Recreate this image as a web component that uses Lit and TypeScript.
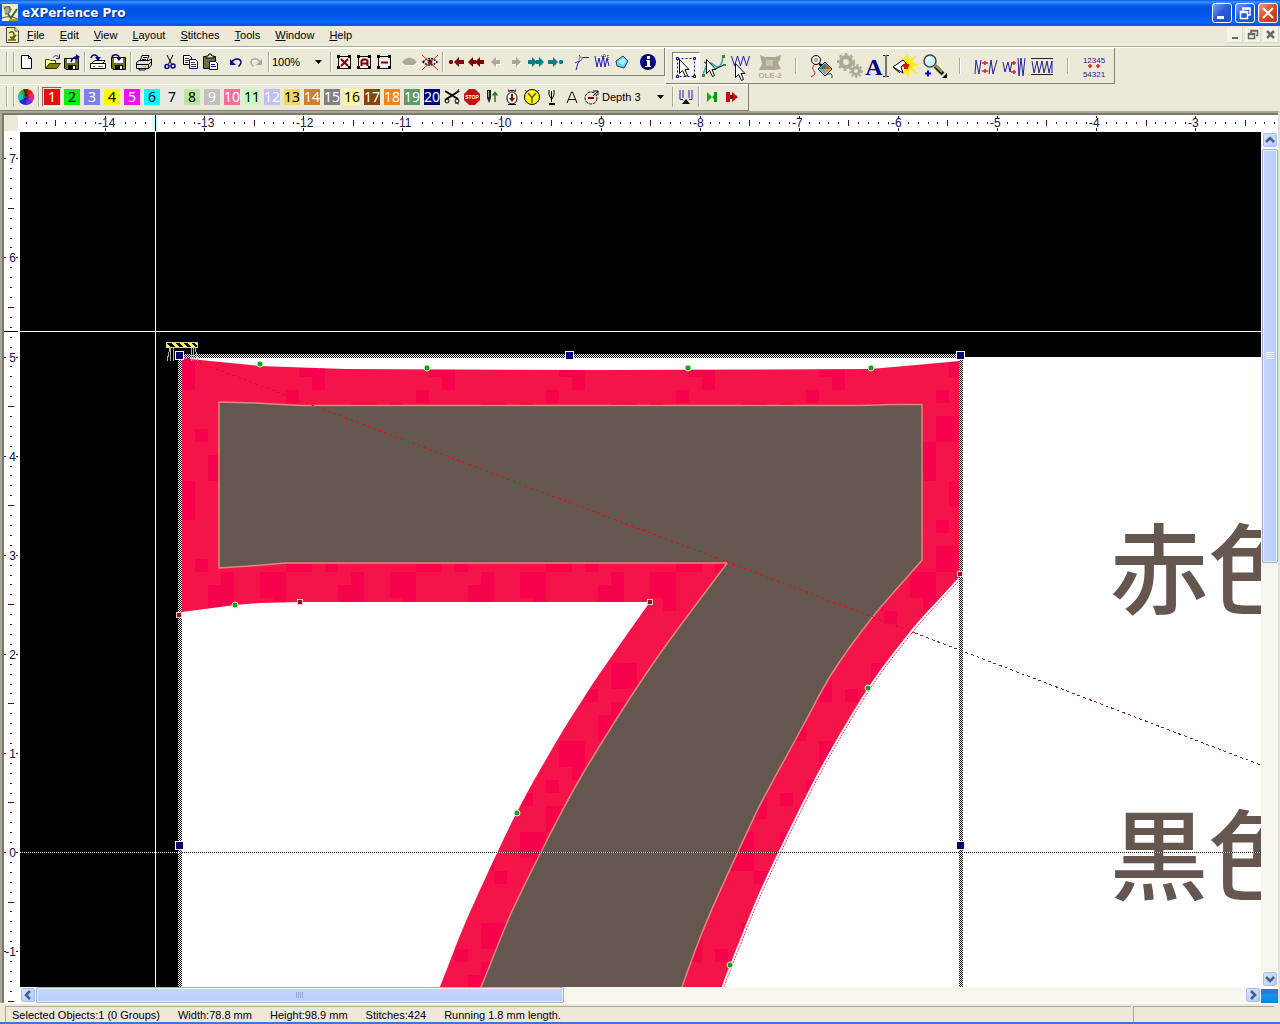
import { LitElement, html, svg, css } from "lit";
import { customElement, state } from "lit/decorators.js";

const cursor = (x: number, y: number) => svg`
  <path transform="translate(${x} ${y})" d="M.5 .5V14.5L3.5 11.5L6.5 17.5L8.5 16.5L6 10.5H10Z" fill="#fff" stroke="#000"/>`;

const node4 = (mark: unknown) => svg`
  <path d="M4.500 4.500H16.500V16.500H4.500Z" fill="#fbeeee" stroke="#000"/>
  <path d="M3 3h3v3H3zM14 3h3v3h-3zM3 14h3v3H3zM14 14h3v3h-3z" fill="#000"/>${mark}`;

const arrow = (d: string, fill: string) => svg`<path d=${d} fill=${fill}/>`;

const icons: Record<string, unknown> = {
  page: svg`<path d="M5.500 3.500H12.500L15.500 6.500V16.500H5.500Z" fill="#fff" stroke="#000"/><path d="M12.500 3.500V6.500H15.500" fill="none" stroke="#000"/>`,
  open: svg`<path d="M3.500 16V7.500H7.500L8.500 8.500H13.500V11" fill="#ffffa0" stroke="#404000"/><path d="M3.500 16.500L7.500 11.500H18.500L14.500 16.500Z" fill="#808000" stroke="#303000"/><path d="M11 5.500C13 3 15 3 17 5.500M17.500 2.500V6.500H14" fill="none" stroke="#102080"/>`,
  save: svg`<path d="M2.500 6.500H16.500V17.500H4L2.500 16Z" fill="#707010" stroke="#000"/><path d="M5 7H13V11H5Z" fill="#eee"/><path d="M6 13H14V17H6Z" fill="#000"/><path d="M11 14h2v3h-2z" fill="#fff"/><path d="M9 10C10 6 12 5 15 5" fill="none" stroke="#000080" stroke-width="1.500"/><path d="M14 2L18 5L14 8Z" fill="#000080"/>`,
  drive: svg`<path d="M4 11L7 8.500H17L15 11" fill="#fff" stroke="#000"/><path d="M2.500 11.500H17.500V16.500H2.500Z" fill="#fff" stroke="#000"/><path d="M5 14h2v1H5z" fill="#0a0"/><path d="M10 14h5v1h-5z" fill="#777"/><path d="M3 6C4 2 9 2 10 6" fill="none" stroke="#000080" stroke-width="1.500"/><path d="M7 5H13L10 9Z" fill="#000080"/>`,
  disk: svg`<path d="M3.500 5.500H17.500V17.500H5L3.500 16Z" fill="#707010" stroke="#000"/><path d="M6 6H15V11H6Z" fill="#fff"/><path d="M7 13H15V17H7Z" fill="#000"/><path d="M12 14h2v3h-2z" fill="#fff"/><path d="M4 5C5 2 10 2 11 5" fill="none" stroke="#000080" stroke-width="1.500"/><path d="M8 5H14L11 9Z" fill="#000080"/>`,
  print: svg`<path d="M6 9L8 3.500H15L13 9Z" fill="#fff" stroke="#000"/><path d="M9 5.500H13M8 7.500H12" stroke="#000"/><path d="M2.500 10.500L5 8.500H15L17.500 7V13L14.500 16.500H2.500Z" fill="#ddd" stroke="#000"/><path d="M3 12.500H14.500L17 10M14.500 13V16" fill="none" stroke="#000"/><path d="M5 16.500H12L11 18H5Z" fill="#fff" stroke="#000"/><path d="M9 14h3v1H9z" fill="#aa0"/>`,
  cut: svg`<path d="M7 3L11.500 12M13 3L8.500 12" stroke="#000"/><circle cx="7" cy="14.500" r="2" fill="none" stroke="#000080" stroke-width="1.500"/><circle cx="13" cy="14" r="2" fill="none" stroke="#000080" stroke-width="1.500"/>`,
  copy: svg`<path d="M3.500 3.500H9.500L11.500 5.500V12.500H3.500Z" fill="#fff" stroke="#000"/><path d="M5 6.500H9M5 8.500H9M5 10.500H8" stroke="#333"/><path d="M9.500 7.500H15.500L17.500 9.500V16.500H9.500Z" fill="#fff" stroke="#000080"/><path d="M11 10.500H15M11 12.500H16M11 14.500H16" stroke="#333"/>`,
  paste: svg`<path d="M3.500 4.500H15.500V16.500H3.500Z" fill="#707040" stroke="#000"/><path d="M6 6V4H8L9 2H11L12 4H14V6Z" fill="#ddd" stroke="#000"/><path d="M9.500 9.500H15.500L17.500 11.500V17.500H9.500Z" fill="#fff" stroke="#000080"/><path d="M11 12.500H15M11 14.500H16" stroke="#000080"/>`,
  undo: svg`<path d="M6 10C8 6 14 6 15 9.500C15.500 12 14 13 12.500 14.500" fill="none" stroke="#000080" stroke-width="1.500"/><path d="M4 7V13H10Z" fill="#000080"/>`,
  redo: svg`<path d="M15 11C13 7 7 7 6 10.500C5.500 13 7 14 8.500 15.500" fill="none" stroke="#fff" stroke-width="1.500"/><path d="M14 10C12 6 6 6 5 9.500C4.500 12 6 13 7.500 14.500" fill="none" stroke="#aca899" stroke-width="1.500"/><path d="M16 7V13H10Z" fill="#aca899"/>`,
  nodeX: node4(svg`<path d="M7 7L14 14M14 7L7 14" stroke="#800000" stroke-width="2"/>`),
  nodeA: node4(svg`<path d="M7.500 14V9L9 7.500H12L13.500 9V14M7.500 11.500H13.500" fill="none" stroke="#800000" stroke-width="2"/>`),
  nodeM: node4(svg`<path d="M7 10.500H14" stroke="#800000" stroke-width="2"/>`),
  eye: svg`<path d="M3 11L6 8L10 6.500L15 8L18 11L15 14H6Z" fill="#fff"/><path d="M2 10L5 7L9 5.500L14 7L17 10L14 13H5Z" fill="#aca899"/>`,
  eyeOff: svg`<path d="M3 10Q10 3 17 10Q10 16 3 10Z" fill="#fff" stroke="#000" stroke-width="1.500" stroke-dasharray="2 1"/><circle cx="10" cy="10" r="2.500" fill="#602020"/><path d="M9 8h2v3H9z" fill="#000"/><path d="M2 3L18 18M18 3L2 18" stroke="#d02020"/>`,
  first: arrow("M3 9L4 8H6L7 9V11L6 12H4L3 11ZM8 10L13 5V8H18V12H13V15Z", "#800000"),
  rewind: arrow("M2 10L7 5V8H10V12H7V15ZM9 10L14 5V8H18V12H14V15Z", "#800000"),
  prev: svg`<g transform="translate(1 1)">${arrow("M5 10L10 5V8H14V12H10V15Z", "#fff")}</g>${arrow("M5 10L10 5V8H14V12H10V15Z", "#aca899")}`,
  next: svg`<g transform="translate(1 1)">${arrow("M15 10L10 5V8H6V12H10V15Z", "#fff")}</g>${arrow("M15 10L10 5V8H6V12H10V15Z", "#aca899")}`,
  forward: arrow("M18 10L13 5V8H10V12H13V15ZM11 10L6 5V8H2V12H6V15Z", "#008080"),
  last: arrow("M17 9L16 8H14L13 9V11L14 12H16L17 11ZM12 10L7 5V8H2V12H7V15Z", "#008080"),
  angle: svg`<path d="M4 18Q5 11 9 7L11 5.500H17" fill="none" stroke="#2020a0"/><path d="M7 3L9 6M3 11L7 9" stroke="#303090"/><circle cx="8.500" cy="7" r="1.500" fill="#ffb" stroke="#886"/>`,
  wave: svg`<path d="M3 4L5 15L7 6L9 15L11 4L13 15L15 6L17 14" fill="none" stroke="#2020b0"/><path d="M9 4h8M12 2v6M16 3v6" stroke="#333" stroke-dasharray="1 1"/>`,
  shape: svg`<path d="M4 9L11 4L16 9L12 16L5 14Z" fill="#60d8e8" stroke="#336"/><path d="M6 10L11 6L14 9L11 13Z" fill="#a8f4fc"/>`,
  info: svg`<circle cx="10" cy="10" r="8" fill="#000080"/><path d="M9 4h3v3H9zM8 8h4v6h1v1H7v-1h2V9H8z" fill="#fff"/>`,

  wheel: svg`<g stroke="none"><path d="M10 10V2A8 8 0 0 1 17 6Z" fill="#f01010"/><path d="M10 10L17 6A8 8 0 0 1 17 14Z" fill="#e02080"/><path d="M10 10L17 14A8 8 0 0 1 10 18Z" fill="#8020e0"/><path d="M10 10V18A8 8 0 0 1 3 14Z" fill="#1030e0"/><path d="M10 10L3 14A8 8 0 0 1 3 6Z" fill="#10c8c0"/><path d="M10 10L3 6A8 8 0 0 1 10 2Z" fill="#30b020"/></g><path d="M10 10L7 2.500A8 8 0 0 1 12 2.500Z" fill="#403010"/><circle cx="10" cy="10" r="3" fill="#000" opacity=".4"/>`,
  trim: svg`<path d="M3 4L16 12M3 13L17 4" stroke="#000" stroke-width="2"/><circle cx="5" cy="14" r="2" fill="none" stroke="#000"/><circle cx="15" cy="14" r="2" fill="none" stroke="#000"/><path d="M17 2L14 6M13 16L17 17" stroke="#1030c0"/>`,
  stop: svg`<path d="M7 2H13L18 7V13L13 18H7L2 13V7Z" fill="#c01010"/><text x="10" y="12" text-anchor="middle" font-size="5" font-weight="700" fill="#fff">STOP</text>`,
  needleUp: svg`<path d="M5 3h4v8l-2 5l-2-5z" fill="#222"/><path d="M6 4h1v6H6z" fill="#aaa"/><path d="M13 6V15M10.500 8.500L13 5.500L15.500 8.500" fill="none" stroke="#108020" stroke-width="1.500"/>`,
  bobbin: svg`<path d="M6 3h1v2M14 3h-1v2M8 3.500h4" stroke="#000" fill="none"/><ellipse cx="10" cy="11" rx="5" ry="6" fill="#fff" stroke="#000"/><path d="M10 7v4" stroke="#800000" stroke-width="2"/><path d="M7 11H13L10 15Z" fill="#800000"/><path d="M6 17.500H14" stroke="#000"/>`,
  clock: svg`<circle cx="10" cy="10" r="7.500" fill="#ffff00" stroke="#000"/><path d="M6 6L10 10.500L14 6M10 10V16" fill="none" stroke="#555" stroke-width="1.500"/><path d="M3 3l2 2M17 3l-2 2" stroke="#1030c0"/>`,
  needle: svg`<path d="M7 3V8L9.500 12M12 3V8L10 12M9.500 4V15" fill="none" stroke="#000"/><path d="M7 17H13" stroke="#000" stroke-width="2"/>`,
  letterA: svg`<path d="M5 16L9.500 5H10.500L15 16M7 12.500H13" fill="none" stroke="#000"/>`,
  depth: svg`<circle cx="9" cy="11" r="6" fill="none" stroke="#000" stroke-dasharray="3 1"/><path d="M6 11H12" stroke="#800000" stroke-width="2"/><path d="M11 4h5v4M11 9L16 4" fill="none" stroke="#000"/>`,
  vmark: svg`<path d="M4 3V12.500H7M7 3V11M16 3V12.500H13M13 3V11" fill="none" stroke="#2020a0"/><path d="M6 17L10 12L14 17Z" fill="#000"/>`,
  goGreen: svg`<path d="M5 5L10 10L5 15ZM15 5V15L10 10Z" fill="#10b010"/><path d="M12 5h3v10h-3z" fill="#109010"/>`,
  goRed: svg`<path d="M4 5h4v10H4zM10 5L16 10L10 15Z" fill="#c01010"/><path d="M8 8h3v4H8z" fill="#800000"/>`,

  select: svg`<path d="M5.500 6.500H22.500V24.500H5.500Z" fill="none" stroke="#000080" stroke-dasharray="2 2"/><path d="M4.500 5.500h2v2h-2zM21.500 5.500h2v2h-2zM4.500 23.500h2v2h-2zM21.500 23.500h2v2h-2z" fill="#fff" stroke="#000080"/>${cursor(7, 7)}`,
  reshape: svg`<path d="M3 24Q7 6 14 13T23 4" fill="none" stroke="#18b0a0" stroke-width="1.500"/><path d="M4 10L15 17L24 13" fill="none" stroke="#000"/><path d="M2 22h3v3H2zM22 3h3v3h-3zM23 12h3v2h-3z" fill="#408040"/>${cursor(6, 7)}`,
  stitchEdit: svg`<path d="M3.500 4L6.500 14L9.500 4L12.500 14L15.500 4L18.500 14L21.500 4" fill="none" stroke="#2020b0"/>${cursor(7, 11)}`,
  ole: svg`<g fill="#aca899"><path d="M4 3L9 5H19L25 3L24 8L22 11L25 17L18 18H9L3 18L6 12Z"/><path d="M10 8h7v6h-7z" fill="#c8c4b4"/><text x="14" y="26" text-anchor="middle" font-size="8" font-weight="700">OLE-2</text></g>`,
  globe: svg`<path d="M7 12Q3 16 6 19T3 25" fill="none" stroke="#c02020"/><circle cx="8" cy="8" r="4.500" fill="#eee" stroke="#000"/><circle cx="8" cy="8" r="1.500" fill="none" stroke="#777"/><path d="M11 12L15 14" stroke="#000" stroke-width="2"/><path d="M17 10L24 17L17 24L10 17Z" fill="#fff" stroke="#000"/><path d="M17 11V17H11Z" fill="#208080"/><path d="M17 17H23L17 23Z" fill="#e0a020"/><path d="M17 11L23 17H17Z" fill="#c05030"/><path d="M11 17H17V23Z" fill="#70a0d0"/><path d="M18 23Q25 19 24 26" fill="none" stroke="#1030a0"/>`,
  gears: svg`<g fill="none" stroke="#aca899"><circle cx="10" cy="10" r="5" stroke-width="4"/><circle cx="10" cy="10" r="8" stroke-width="2" stroke-dasharray="3 3"/><circle cx="20" cy="19" r="3.500" stroke-width="3"/><circle cx="20" cy="19" r="6" stroke-width="2" stroke-dasharray="2 2"/></g>`,
  lettering: svg`<text x="10" y="23" text-anchor="middle" font-family="Liberation Serif, serif" font-size="24" font-weight="700" fill="#000080">A</text><path d="M19 3.500H21.500M22.500 3.500H25M19 24.500H21.500M22.500 24.500H25M22 4V24" stroke="#000"/>`,
  burst: svg`<path d="M14 14L6 3L12 8L15 1L17 8L25 3L20 10L27 13L20 15L26 22L18 18L17 26L13 20L9 26Z" fill="#ffee00"/><path d="M1 15L11 8L14 11L9 15L11 21Z" fill="#fff" stroke="#000"/><path d="M2 16L8 21" stroke="#000"/><path d="M11 12h2v-1h2v1h2v3h-1v2h-4v-2h-1z" fill="#e01010"/>`,
  zoom: svg`<circle cx="10" cy="9" r="6" fill="#c8f4fc" stroke="#444" stroke-width="1.500"/><path d="M7 9Q8 6 11 6" fill="none" stroke="#fff" stroke-width="2"/><path d="M15 14L23 22" stroke="#222" stroke-width="4"/><path d="M15 13L22 20" stroke="#a0a040" stroke-width="2"/><path d="M22 26h5v-5z" fill="#000"/><path d="M5 21.500h6M8 18.500v6" stroke="#0000c0" stroke-width="2"/>`,
  zigA: svg`<path d="M3 22L4 8L7 22L9 8M17 22L19 8L21 22L25 8" fill="none" stroke="#2020a0"/><path d="M10 11h6M13 9v4M10 19h6M13 17v4" stroke="#e02020" stroke-width="1.500"/>`,
  zigB: svg`<path d="M3 10L5 20L8 10L10 20L12 10M18 6L19 24L21 6L23 24L25 6" fill="none" stroke="#2020a0"/><path d="M11 11h5M14 9v4M11 20h5M14 18v4" stroke="#e02020" stroke-width="1.500"/>`,
  zigC: svg`<path d="M3 6.500H25M3 22.500H25" stroke="#222"/><path d="M4 9L6 21L9 9L11 21L14 9L16 21L19 9L21 21L24 9V21" fill="none" stroke="#2020a0"/>`,
  reorder: svg`<text x="14" y="11" text-anchor="middle" font-size="8" fill="#2020a0">12345</text><text x="14" y="25" text-anchor="middle" font-size="8" fill="#2020a0">54321</text><path d="M8 14h4M10 12v4M16 14h4M18 12v4" stroke="#e02020" stroke-width="1.500"/>`,
};

const menus: [string, string][] = [["F", "ile"], ["E", "dit"], ["V", "iew"], ["L", "ayout"], ["S", "titches"], ["T", "ools"], ["W", "indow"], ["H", "elp"]];

type Item = [string, string] | "|" | "_" | "zoom";
const standard: Item[] = [
  ["page", "New"], "_", ["open", "Open"], ["save", "Save"], "|", ["drive", "Read from disk"], ["disk", "Write to disk"], "|",
  ["print", "Print"], "_", ["cut", "Cut"], ["copy", "Copy"], ["paste", "Paste"], "_", ["undo", "Undo"], ["redo", "Redo"], "|", "zoom", "|",
  ["nodeX", "Select all"], ["nodeA", "Select auto"], ["nodeM", "Deselect"], "_", ["eye", "Show"], ["eyeOff", "Hide"], "|",
  ["first", "First stitch"], ["rewind", "Back many"], ["prev", "Back"], ["next", "Forward"], ["forward", "Forward many"], ["last", "Last stitch"], "_",
  ["angle", "Angle"], ["wave", "Stitch view"], ["shape", "Shape view"], "_", ["info", "Information"],
];
const tools: Item[] = [
  ["select", "Select"], ["reshape", "Reshape"], ["stitchEdit", "Edit stitches"], ["ole", "OLE object"], "|",
  ["globe", "Artwork"], ["gears", "Settings"], ["lettering", "Lettering"], ["burst", "Effects"], ["zoom", "Zoom"], "|",
  ["zigA", "Spacing"], ["zigB", "Density"], ["zigC", "Width"], "|", ["reorder", "Reverse order"],
];
const commands: [string, string][] = [["trim", "Trim"], ["stop", "Stop"], ["needleUp", "Needle up"], ["bobbin", "Bobbin"], ["clock", "Speed"], ["needle", "Needle"], ["letterA", "Text"], ["depth", "Depth"]];

const threads: [string, string][] = [
  ["#e80c0c", "#fff"], ["#0cf00c", "#000"], ["#8080e8", "#fff"], ["#ffff00", "#000"], ["#f010f0", "#fff"],
  ["#00ffff", "#000"], ["#e8e8e8", "#000"], ["#b4e8a4", "#000"], ["#c0c0c0", "#fff"], ["#f07098", "#fff"],
  ["#c0ffc0", "#000"], ["#c0c0f8", "#fff"], ["#f4d468", "#000"], ["#c88034", "#fff"], ["#808080", "#fff"],
  ["#ffffa0", "#000"], ["#884404", "#fff"], ["#f08418", "#fff"], ["#609868", "#fff"], ["#000080", "#fff"],
];

const PITCH = 99.1;
const range = (from: number, to: number) => Array.from({ length: Math.max(0, to - from + 1) }, (_, i) => from + i);

const topRuler = (width: number) => range(-148, Math.floor(((width - 85) * 10) / PITCH) - 140).map((n) => {
  const x = Math.round(85 + ((n + 140) * PITCH) / 10);
  if (n % 10 === 0) {
    return svg`<path d="M${x} 1h1v2h-1zM${x} 13h1v3h-1z"/>${x + 12 < width ? svg`<text x=${x - 7} y="12">${n / 10}</text>` : null}`;
  }
  if (n % 5 === 0) return svg`<path d="M${x} 5h1v6h-1z"/>`;
  if (n < -90 && (n + 200) % 10 === 1) return null;
  return svg`<path d="M${x} 7h1v2h-1z"/>`;
});

const sideRuler = (height: number) => range(Math.ceil(((720 - height) * 10) / PITCH), 72).map((n) => {
  const y = Math.round(720 - (n * PITCH) / 10);
  if (n % 10 === 0) {
    return svg`<path d="M0 ${y}h2v1h-2zM12 ${y}h2v1h-2z"/>${y + 8 < height ? svg`<text x="12" y=${y + 5} text-anchor="end">${n / 10}</text>` : null}`;
  }
  if (n % 5 === 0) return svg`<path d="M4 ${y}h6v1h-6z"/>`;
  return svg`<path d="M6 ${y}h2v1h-2z"/>`;
});

type Point = [number, number];

/* Continues a path through the points with Catmull-Rom tangents. */
const smooth = (pts: Point[]) => pts.slice(1).map((p, i) => {
  const a = pts[i];
  const before = pts[i - 1] ?? a;
  const after = pts[i + 2] ?? p;
  const c = [a[0] + (p[0] - before[0]) / 6, a[1] + (p[1] - before[1]) / 6, p[0] - (after[0] - a[0]) / 6, p[1] - (after[1] - a[1]) / 6];
  return `C${c.map(Math.round).join(" ")} ${p.join(" ")}`;
}).join("");

const outerRight: Point[] = [[960, 576], [909, 633], [868, 688], [829, 753], [798, 812], [757, 898], [730, 965], [722, 987]];
const outerLeft: Point[] = [[440, 987], [470, 912], [517, 812], [552, 749], [590, 688], [650, 602]];
const innerRight: Point[] = [[922, 560], [871, 619], [831, 675], [799, 733], [756, 813], [706, 923], [682, 987]];
const innerLeft: Point[] = [[481, 987], [509, 918], [543, 848], [582, 775], [652, 665], [727, 563]];

const OUTER = `M182 358L210 361L260 366L345 369L600 370L870 369L905 366L960 361V576${smooth(outerRight)}H440${smooth(outerLeft)}H300L260 603L235 605L182 612Z`;
const INNER = `M219 402L255 403L300 405.500H860L890 404.500H922V560${smooth(innerRight)}V992H481V987${smooth(innerLeft)}H285L250 566L219 568Z`;
const STITCH = `M962 577${smooth(outerRight.map(([x, y]) => [x + 2, y + 1] as Point))}`;

const greenNodes = [[260, 364], [427, 368], [688, 368], [871, 368], [235, 605], [868, 688], [517, 813], [730, 965]];
const redNodes = [[300, 602], [650, 602], [179, 615], [960, 574]];
const handles = [[179, 355], [569, 355], [960, 355], [179, 845], [960, 845]];
const blocks = [[0, 13, 13], [26, 0, 13], [26, 26, 26], [65, 39, 13], [91, 13, 26], [78, 65, 26], [13, 78, 13], [39, 91, 26], [104, 91, 13], [0, 52, 26], [52, 117, 13], [91, 52, 13]];

const artwork = () => svg`
  <defs>
    <pattern id="hatch" width="2" height="2" patternUnits="userSpaceOnUse">
      <rect width="2" height="2" fill="#fff"/><path d="M0 0h1v1H0zM1 1h1v1H1z" fill="#000"/>
    </pattern>
    <pattern id="mottle" width="130" height="130" patternUnits="userSpaceOnUse">
      <rect width="130" height="130" fill="#f5144a"/>
      ${blocks.map(([x, y, s]) => svg`<rect x=${x} y=${y} width=${s} height=${s} fill="#f6034c"/>`)}
    </pattern>
  </defs>
  <g transform="translate(-20 -132)">
    <rect x="180" y="357" width="4000" height="3000" fill="#fff"/>
    <path d=${OUTER} fill="url(#mottle)"/>
    <path d=${STITCH} fill="none" stroke="#d04070" stroke-dasharray="2 1"/>
    <path d=${INNER} fill="#655650" stroke="#e08878" stroke-width="1.500"/>
    <g font-family="Noto Sans CJK JP, sans-serif" font-size="98" font-weight="500" fill="#655650">
      <text x="1110" y="606">赤色</text><text x="1110" y="892">黒色</text>
    </g>
    <path d="M182 356L915 633" stroke="#d01818" stroke-dasharray="3 3" shape-rendering="crispEdges"/>
    <path d="M915 633L1300 780" stroke="#902020" stroke-dasharray="3 3" shape-rendering="crispEdges"/>
    <g shape-rendering="crispEdges">
      <path d="M178 354h785v4H178zM178 358h4v3000h-4zM959 358h4v3000h-4z" fill="url(#hatch)"/>
      <path d="M20 852.500H180" stroke="#fff" stroke-dasharray="1 1"/>
      <path d="M182 852.500H4000" stroke="#fff"/><path d="M182 852.500H4000" stroke="#000" stroke-dasharray="1 1"/>
      <path d="M155.500 132V3000M20 331.500H4000" stroke="#fff"/>
      <path d="M166 342h32v6h-32z" fill="#f8f060"/>
      <path d="M166 343l4 4h5l-4-4zM175 343l4 4h4l-4-4zM183 343l4 4h4l-4-4zM191 343l4 4h3l-4-4z" fill="#000"/>
      <path d="M166.500 342.500h31v5h-31z" fill="none" stroke="#d8d490"/>
      <path d="M170 348l-3 13M171 348l-1 13M173 348v13M192 348l-1 13M193 348v13M195 348l3 13" stroke="#aaa"/>
      ${handles.map(([x, y]) => svg`<rect x=${x - 4} y=${y - 4} width="9" height="9" fill="#fff"/><rect x=${x - 3} y=${y - 3} width="7" height="7" fill="#000070"/>`)}
      ${redNodes.map(([x, y]) => svg`<rect x=${x - 3} y=${y - 3} width="6" height="6" fill="#e8c8c8"/><rect x=${x - 2} y=${y - 2} width="4" height="4" fill="#901818"/>`)}
    </g>
    ${greenNodes.map(([x, y]) => svg`<circle cx=${x} cy=${y} r="3" fill="#18a018" stroke="#d0f0d0"/>`)}
  </g>`;

@customElement("app-root")
export class AppRoot extends LitElement {
  @state() private tool = "select";
  @state() private thread = 0;
  @state() private view = { width: window.innerWidth, height: window.innerHeight };

  private onResize = () => {
    this.view = { width: window.innerWidth, height: window.innerHeight };
  };

  connectedCallback() {
    super.connectedCallback();
    window.addEventListener("resize", this.onResize);
  }

  disconnectedCallback() {
    window.removeEventListener("resize", this.onResize);
    super.disconnectedCallback();
  }

  static styles = css`
    :host { display: block; font: 11px/14px "Liberation Sans", "Noto Sans CJK JP", sans-serif; color: #000; }
    * { box-sizing: border-box; }
    button, select { font: inherit; color: inherit; border: 0; padding: 0; margin: 0; background: none; border-radius: 0; }
    svg { display: block; }
    .window { display: flex; flex-direction: column; height: 100vh; overflow: hidden; background: #ece9d8; border-bottom: 2px solid #3c7ac8; }
    .title { display: flex; align-items: center; flex: none; height: 26px; padding: 0 2px; gap: 4px; color: #fff;
      background: linear-gradient(#0a5ae4 0, #3c96ff 2px, #0a5cf0 5px, #0054e0 9px, #0058e8 16px, #0466ff 22px, #0450d8 26px); }
    .title h1 { flex: 1; margin: 0; font: 700 12px/16px "DejaVu Sans", sans-serif; text-shadow: 1px 1px 0 #0a2a80; }
    .caption { display: flex; gap: 3px; }
    .caption button { width: 20px; height: 20px; border: 1px solid #fff; border-radius: 3px; background: linear-gradient(135deg, #7ca0f4, #2858dc 50%, #2050d0); }
    .caption .close { background: linear-gradient(135deg, #f0a080, #d84820 50%, #c03810); }
    .menu { display: flex; align-items: center; flex: none; height: 22px; padding: 0 1px 3px 6px; border-bottom: 1px solid #fff; box-shadow: inset 0 -1px #aca899; }
    .menu nav { display: flex; gap: 15px; flex: 1; padding-left: 8px; }
    .mdi { display: flex; gap: 2px; }
    .mdi button { width: 16px; height: 16px; background: #f4f2ea; border-right: 1px solid #dcd8c8; border-bottom: 1px solid #dcd8c8; }
    .bars { flex: none; }
    .row { display: flex; align-items: flex-start; }
    .bar { display: flex; align-items: center; height: 28px; padding: 0 6px; border-right: 1px solid #808078; border-bottom: 1px solid #808078; box-shadow: inset 0 1px #fff; }
    .bar.low { height: 27px; }
    .bar.tall { height: 36px; border-left: 1px solid #fff; }
    .grip { width: 8px; height: 20px; margin-right: 2px; border: solid #aca899; border-width: 0 1px; box-shadow: inset 1px 0 #fff, inset -3px 0 #ece9d8, 1px 0 #fff; }
    .sep { width: 2px; height: 20px; margin: 0 2px; border-left: 1px solid #aca899; background: #fff; }
    .gap { width: 6px; }
    .tall .sep { height: 16px; margin: 0 11px; }
    .ic { width: 20px; height: 20px; }
    .ic svg { overflow: visible; }
    .tall .ic { width: 28px; height: 28px; }
    .ic.on { border: 1px solid #808078; border-right-color: #fff; border-bottom-color: #fff; background: #f8f7f2; }
    .ic.on svg { margin: -1px; }
    .combo { display: grid; align-items: center; width: 56px; height: 20px; }
    .combo.wide { width: 68px; }
    .combo > * { grid-area: 1 / 1; }
    .combo select { width: 100%; height: 20px; appearance: none; }
    .combo svg { justify-self: end; margin-right: 6px; pointer-events: none; }
    .swatch { width: 20px; height: 20px; padding: 2px; border: 0; font: 14px/16px "Noto Sans", sans-serif; }
    .swatch.on { padding: 1px; border: 1px solid #806060; border-right-color: #fff; border-bottom-color: #fff; }
    .swatch span { display: flex; justify-content: center; height: 16px; }
    .work { flex: 1; min-height: 0; display: grid; grid-template: 16px 1px minmax(0, 1fr) 16px / 14px 2px minmax(0, 1fr) 17px; padding: 2px 0 0 2px; border: 2px solid #aca899; border-right-color: #e4e2d6; border-bottom: 0; box-shadow: inset 2px 2px #7c796c; background: #fff; }
    .corner { grid-area: 1 / 1; background: #ece9d8; }
    .ruler { width: 100%; height: 100%; overflow: hidden; fill: #4a0a28; font-size: 12px; shape-rendering: crispEdges; }
    .ruler text { fill: #1a0a4a; }
    .across { grid-area: 1 / 3 / 2 / 5; }
    .down { grid-area: 3 / 1 / 5 / 2; }
    .canvas { grid-area: 3 / 3; width: 100%; height: 100%; background: #000; overflow: hidden; }
    .vbar, .hbar { display: flex; background: #f6f5ee; }
    .vbar { grid-area: 3 / 4; flex-direction: column; padding-left: 1px; }
    .hbar { grid-area: 4 / 3; }
    .vbar button, .hbar button { flex: none; width: 16px; height: 16px; border: 1px solid #fff; border-radius: 3px; background: linear-gradient(135deg, #dce6fe, #b4c8f8); box-shadow: inset 0 0 0 1px #a8bcec; }
    .vbar button svg, .hbar button svg { margin: 0 -1px; }
    .track { flex: 1; min-width: 0; min-height: 0; }
    .thumb { display: flex; align-items: center; justify-content: center; border: 1px solid #98b0d8; border-radius: 2px; box-shadow: inset 0 0 0 1px #e8f0ff; }
    .vbar .thumb { height: 50.3%; background: linear-gradient(90deg, #c8d6fc, #b8ccfc); margin-top: 1px; }
    .hbar .thumb { width: 43.7%; height: 16px; background: linear-gradient(#c8d6fc, #b8ccfc); }
    .size { grid-area: 4 / 4; margin-top: 2px; background: linear-gradient(#2878d8 0 4px, #1098f0 6px, #0880d8); }
    .status { display: flex; flex: none; height: 19px; padding: 2px 6px 0 5px; border-top: 1px solid #fff; gap: 2px; }
    .status > div { display: flex; align-items: center; border: solid #aca899; border-width: 1px 0 0 1px; }
    .fields { flex: 1; gap: 18px; padding-left: 6px; }
    .side { width: 141px; }
  `;

  private icon(name: string, size = 20) {
    return html`<svg width=${size} height=${size} viewBox="0 0 ${size} ${size}" aria-hidden="true">${icons[name]}</svg>`;
  }

  private combo(label: string, value: string, wide = false) {
    return html`<span class="combo ${wide ? "wide" : ""}"><select aria-label=${label}><option>${value}</option></select>
      <svg width="7" height="4" aria-hidden="true"><path d="M0 0H7L3.500 4Z"/></svg></span>`;
  }

  private items(list: Item[], size = 20) {
    return list.map((it) => {
      if (it === "|") return html`<i class="sep"></i>`;
      if (it === "_") return html`<i class="gap"></i>`;
      if (it === "zoom") return this.combo("Zoom level", "100%");
      const on = size === 28 && this.tool === it[0];
      return html`<button class="ic ${on ? "on" : ""}" aria-label=${it[1]} @click=${() => { if (size === 28) this.tool = it[0]; }}>${this.icon(it[0], size)}</button>`;
    });
  }

  private chevron(label: string, d: string) {
    return html`<button aria-label=${label}><svg width="16" height="14" aria-hidden="true"><path d=${d} fill="none" stroke="#44608c" stroke-width="2.500"/></svg></button>`;
  }

  render() {
    return html`
      <div class="window">
        <header class="title">
          <svg width="16" height="18" viewBox="0 0 16 18" aria-hidden="true"><rect width="16" height="17" fill="#f0f0c0"/><path d="M1 2h7l2 3-2 4-5 1z" fill="#a8a890"/><path d="M6 10L9 14L15 5" fill="none" stroke="#307030" stroke-width="2"/><path d="M2 5q5-5 6 0t-5 5M0 14q8-3 16 1" fill="none" stroke="#555"/><path d="M7 15h9v2H7z" fill="#b0a020"/></svg>
          <h1>eXPerience Pro</h1>
          <div class="caption">
            <button aria-label="Minimize"><svg width="18" height="18"><path d="M4 12h7v3H4z" fill="#fff"/></svg></button>
            <button aria-label="Restore"><svg width="18" height="18"><path d="M7 7V4H14V11H12M7 5H14M4.500 7.500H11.500V14.500H4.500ZM4 8.500H12" fill="none" stroke="#fff" stroke-width="1.500"/></svg></button>
            <button class="close" aria-label="Close"><svg width="18" height="18"><path d="M4 4L14 14M14 4L4 14" stroke="#fff" stroke-width="2"/></svg></button>
          </div>
        </header>
        <div class="menu">
          <svg width="13" height="16" viewBox="0 0 13 16" aria-hidden="true"><path d="M.5 .5H9L12.500 4V15.500H.5Z" fill="#f0f0a0" stroke="#444"/><path d="M9 .5V4H12.500" fill="#fff" stroke="#444"/><path d="M3 6q4-3 5 1t-4 3l3 2 3-4M2 13h8" fill="none" stroke="#606020" stroke-width="1.500"/></svg>
          <nav>${menus.map(([k, rest]) => html`<button><u>${k}</u>${rest}</button>`)}</nav>
          <div class="mdi">
            <button aria-label="Minimize document"><svg width="15" height="15"><path d="M5 10h6v2H5z" fill="#6a685c"/></svg></button>
            <button aria-label="Restore document"><svg width="15" height="15"><path d="M6 6V3.500H12.500V8.500H11M6 4H12M3.500 6.500H9.500V11.500H3.500ZM3 7.500H10" fill="none" stroke="#6a685c" stroke-width="1.500"/></svg></button>
            <button aria-label="Close document"><svg width="15" height="15"><path d="M4 4L11 11M11 4L4 11" stroke="#6a685c" stroke-width="2.500"/></svg></button>
          </div>
        </div>
        <div class="bars">
          <div class="row">
            <div class="bar" role="toolbar" aria-label="Standard"><i class="grip"></i>${this.items(standard)}</div>
            <div class="bar tall" role="toolbar" aria-label="Tools">${this.items(tools, 28)}</div>
          </div>
          <div class="row">
            <div class="bar low" role="toolbar" aria-label="Colors"><i class="grip"></i>
              <button class="ic" aria-label="Color wheel">${this.icon("wheel")}</button><i class="sep"></i>
              ${threads.map(([bg, fg], i) => html`<button class="swatch ${this.thread === i ? "on" : ""}" @click=${() => (this.thread = i)}><span style="background:${bg};color:${fg}">${i + 1}</span></button>`)}
              ${this.items(commands)}
              ${this.combo("Depth", "Depth 3", true)}<i class="sep"></i>
              ${this.items([["vmark", "Density marks"], "|", ["goGreen", "Play"], ["goRed", "Stop playback"]])}
            </div>
          </div>
        </div>
        <main class="work">
          <div class="corner"></div>
          <svg class="ruler across" aria-hidden="true">${topRuler(this.view.width - 22)}<path d="M132 0h6v16h-6z" fill="#d8fcfc"/><path d="M135 0h1v16h-1z" fill="#000"/></svg>
          <svg class="ruler down" aria-hidden="true">${sideRuler(this.view.height - 153)}<path d="M0 199h14v1h-14z" fill="#000"/></svg>
          <svg class="canvas" role="img" aria-label="Design canvas">${artwork()}</svg>
          <div class="vbar">
            ${this.chevron("Scroll up", "M4 9L8 5L12 9")}
            <div class="track"><div class="thumb"><svg width="8" height="8"><path d="M0 .5H8M0 2.500H8M0 4.500H8M0 6.500H8" stroke="#eef4ff"/></svg></div></div>
            ${this.chevron("Scroll down", "M4 5L8 9L12 5")}
          </div>
          <div class="hbar">
            ${this.chevron("Scroll left", "M10 3L6 7L10 11")}
            <div class="track"><div class="thumb"><svg width="8" height="8"><path d="M.5 1V7M2.500 1V7M4.500 1V7M6.500 1V7" stroke="#8ca8e0"/></svg></div></div>
            ${this.chevron("Scroll right", "M6 3L10 7L6 11")}
          </div>
          <div class="size"></div>
        </main>
        <footer class="status">
          <div class="fields"><span>Selected Objects:1 (0 Groups)</span><span>Width:78.8 mm</span><span>Height:98.9 mm</span><span>Stitches:424</span><span>Running 1.8 mm length.</span></div>
          <div class="side"></div>
        </footer>
      </div>`;
  }
}
